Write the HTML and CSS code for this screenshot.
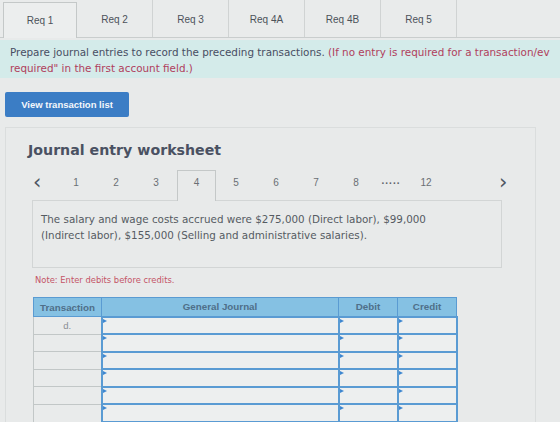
FILE: index.html
```html
<!DOCTYPE html>
<html>
<head>
<meta charset="utf-8">
<meta name="viewport" content="width=device-width, initial-scale=1">
<title>Journal entry worksheet</title>
<link rel="stylesheet" href="styles.css">
</head>
<body>
<div class="req-tabs">
    <div class="req-tab active">Req 1</div>
    <div class="req-tab">Req 2</div>
    <div class="req-tab">Req 3</div>
    <div class="req-tab">Req 4A</div>
    <div class="req-tab">Req 4B</div>
    <div class="req-tab">Req 5</div>
</div>

<div class="instructions">
    <p><span class="lead">Prepare journal entries to record the preceding transactions.</span> <span class="hint">(If no entry is required for a transaction/ev<br>required" in the first account field.)</span></p>
</div>

<div class="btn-row">
    <div class="btn-primary">View transaction list</div>
</div>

<div class="worksheet">
    <h2 class="worksheet-title">Journal entry worksheet</h2>

    <div class="pager">
        <span class="pager-arrow">&#x2039;</span>
        <span class="page">1</span>
        <span class="page">2</span>
        <span class="page">3</span>
        <span class="page current">4</span>
        <span class="page">5</span>
        <span class="page">6</span>
        <span class="page">7</span>
        <span class="page">8</span>
        <span class="page dots">.....</span>
        <span class="page">12</span>
        <span class="pager-arrow next">&#x203A;</span>
    </div>

    <div class="entry-desc">
        <p>The salary and wage costs accrued were $275,000 (Direct labor), $99,000<br>(Indirect labor), $155,000 (Selling and administrative salaries).</p>
    </div>

    <p class="note">Note: Enter debits before credits.</p>

    <table class="journal">
        <colgroup>
            <col class="col-trans">
            <col class="col-account">
            <col class="col-amount">
            <col class="col-amount">
        </colgroup>
        <thead>
            <tr>
                <th class="trans">Transaction</th>
                <th>General Journal</th>
                <th>Debit</th>
                <th>Credit</th>
            </tr>
        </thead>
        <tbody>
            <tr><td class="trans">d.</td><td class="input"></td><td class="input"></td><td class="input"></td></tr>
            <tr><td class="trans"></td><td class="input"></td><td class="input"></td><td class="input"></td></tr>
            <tr><td class="trans"></td><td class="input"></td><td class="input"></td><td class="input"></td></tr>
            <tr><td class="trans"></td><td class="input"></td><td class="input"></td><td class="input"></td></tr>
            <tr><td class="trans"></td><td class="input"></td><td class="input"></td><td class="input"></td></tr>
            <tr><td class="trans"></td><td class="input"></td><td class="input"></td><td class="input"></td></tr>
        </tbody>
    </table>
</div>
</body>
</html>
```

FILE: styles.css
```css
/* Reset */
* { margin: 0; padding: 0; box-sizing: border-box; }

body {
    width: 560px;
    height: 422px;
    overflow: hidden;
    background: #e8eaea;
    font-family: "DejaVu Sans", Verdana, sans-serif;
    color: #555a60;
}

/* Requirement tabs */
.req-tabs {
    display: flex;
    height: 38px;
    padding-left: 3px;
    border-bottom: 1px solid #c9cdcd;
    background: #e9ebeb;
}

.req-tab {
    width: 76px;
    padding-top: 14px;
    text-align: center;
    font-family: "Liberation Sans", Arial, sans-serif;
    font-size: 10px;
    color: #4c525a;
    border-right: 1px solid #d0d3d3;
}

.req-tab.active {
    margin-top: 2px;
    margin-bottom: -1px;
    padding-top: 12px;
    width: 74px;
    background: #eceeee;
    border: 1px solid #c4c8c8;
    border-bottom: 0;
}

/* Instruction strip */
.instructions {
    margin-top: 2px;
    height: 38px;
    padding: 4px 10px 0;
    background: #d4ebea;
    white-space: nowrap;
    overflow: hidden;
}

.instructions p {
    font-size: 10.4px;
    line-height: 16px;
}

.instructions .lead { color: #484e63; }
.instructions .hint { color: #b0405c; }

/* Button */
.btn-row {
    padding: 14px 0 0 5px;
}

.btn-primary {
    width: 124px;
    height: 25px;
    line-height: 25px;
    text-align: center;
    background: #3b7dc5;
    border-radius: 2px;
    color: #f4f7fb;
    font-family: "Liberation Sans", Arial, sans-serif;
    font-weight: bold;
    font-size: 9.5px;
}

/* Worksheet panel */
.worksheet {
    margin: 10px 0 0 5px;
    width: 531px;
    height: 300px;
    padding: 13px 0 0 22px;
    border: 1px solid #dadddd;
    border-bottom: 0;
}

.worksheet-title {
    font-size: 14.2px;
    line-height: 18px;
    font-weight: bold;
    color: #4a5162;
}

/* Pager */
.pager {
    display: flex;
    align-items: stretch;
    width: 482px;
    height: 31px;
    margin: 11px 0 0 4px;
    position: relative;
    z-index: 1;
}

.pager-arrow {
    width: 24px;
    padding-top: 2px;
    padding-left: 1px;
    font-family: "DejaVu Sans", sans-serif;
    font-size: 21px;
    line-height: 20px;
    color: #4f5662;
    text-align: left;
}

.pager-arrow.next {
    width: 16px;
    margin-left: auto;
}

.page {
    width: 40px;
    padding-top: 7px;
    text-align: center;
    font-family: "Liberation Sans", Arial, sans-serif;
    font-size: 10px;
    color: #6a6f74;
}

.page.current {
    background: #e8eaea;
    border: 1px solid #c4c8c8;
    border-bottom: 0;
    padding-top: 6px;
    margin-left: 1px;
    width: 39px;
}

.page.dots {
    width: 30px;
    padding-top: 5px;
    font-weight: bold;
    letter-spacing: 1px;
    color: #5d6268;
}

/* Transaction description */
.entry-desc {
    width: 470px;
    height: 68px;
    margin: -1px 0 0 4px;
    padding: 10px 8px 0;
    border: 1px solid #d2d5d5;
}

.entry-desc p {
    font-size: 10.35px;
    line-height: 16px;
    color: #555b62;
}

.note {
    margin: 7px 0 0 7px;
    font-size: 8.4px;
    line-height: 10px;
    color: #c45467;
}

/* Journal table */
.journal {
    margin: 12px 0 0 5px;
    border-collapse: collapse;
    table-layout: fixed;
    width: 423px;
    font-family: "Liberation Sans", Arial, sans-serif;
}

.col-trans { width: 68px; }
.col-account { width: 237px; }
.col-amount { width: 59px; }

.journal th {
    height: 19px;
    background: #85c1e3;
    border: 1px solid #5a9bd2;
    font-size: 9.8px;
    font-weight: bold;
    color: #4f6f89;
    text-align: center;
}

.journal td {
    height: 17.6px;
    font-size: 9.5px;
    color: #8a8f94;
    text-align: center;
}

.journal td.trans {
    background: #e9ebeb;
    border: 1px solid #c2c7c7;
}

.journal td.input {
    position: relative;
    background: #edefef;
    border: 2px solid #5a9bd3;
}

/* little dropdown flag in the corner of each entry cell */
.journal td.input::before {
    content: "";
    position: absolute;
    top: 1px;
    left: 0;
    border-left: 4px solid #3e87d0;
    border-top: 2.5px solid transparent;
    border-bottom: 2.5px solid transparent;
}
```
